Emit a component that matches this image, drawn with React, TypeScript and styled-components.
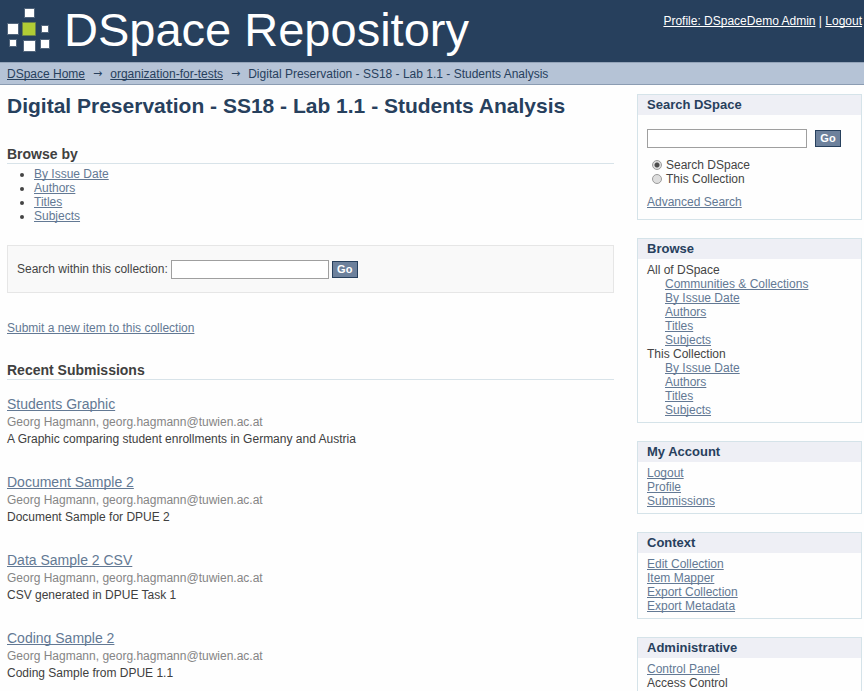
import React from "react";
import styled, { createGlobalStyle } from "styled-components";

const GlobalStyle = createGlobalStyle`
  *, *::before, *::after { box-sizing: border-box; }
  body {
    margin: 0;
    background: #fefefe;
    color: #444444;
    font-family: "Liberation Sans", Arial, Helvetica, sans-serif;
    font-size: 12px;
    line-height: 14px;
  }
  h1, h2, h3, p, ul { margin: 0; padding: 0; }
`;

const Header = styled.header`
  display: flex;
  justify-content: space-between;
  align-items: flex-start;
  height: 62px;
  padding: 0 2px 0 7px;
  background: #27405d;
  color: #ffffff;
`;

const Brand = styled.div`
  display: flex;
  align-items: center;
  gap: 14px;
  height: 60px;
`;

const SiteName = styled.div`
  font-size: 47px;
  line-height: 60px;
`;

const UserBox = styled.nav`
  padding-top: 14px;
`;

const Link = styled.a<{ $tone?: "light" | "dark" }>`
  color: ${(p) =>
    p.$tone === "light" ? "#ffffff" : p.$tone === "dark" ? "#27405d" : "#637994"};
  text-decoration: underline;
  text-decoration-skip-ink: none;
`;

const Trail = styled.ul`
  display: flex;
  align-items: center;
  gap: 8px;
  height: 23px;
  padding: 0 7px;
  list-style: none;
  white-space: nowrap;
  background: #b5c3d6;
  border-top: 1px solid #94a4b9;
  border-bottom: 1px solid #8b9cb2;
  color: #27405d;
`;

const TrailArrow = styled.li`
  font-family: "DejaVu Sans", sans-serif;
  font-size: 11px;
`;

const Layout = styled.div`
  display: grid;
  grid-template-columns: minmax(0, 1fr) 225px;
  column-gap: 23px;
  padding: 0 2px 0 7px;
`;

const Main = styled.main`
  padding-top: 8px;
`;

const PageTitle = styled.h1`
  color: #27405d;
  font-size: 21px;
  line-height: 26px;
`;

const SectionTitle = styled.h2`
  margin-top: 26px;
  border-bottom: 1px solid #d8e3e9;
  color: #404040;
  font-size: 14px;
  line-height: 18px;
`;

const BulletList = styled.ul`
  margin-top: 3px;
  padding-left: 27px;
`;

const CollectionSearch = styled.form`
  display: flex;
  align-items: center;
  gap: 3px;
  height: 48px;
  margin-top: 22px;
  padding: 0 9px;
  background: #f9f9f9;
  border: 1px solid #e6e6e6;
`;

const TextField = styled.input<{ $width: number }>`
  width: ${(p) => p.$width}px;
  height: 19px;
  margin: 0;
  padding: 1px 3px;
  background: #ffffff;
  border: 1px solid #9f9f9f;
  border-radius: 0;
  font: inherit;
`;

const GoButton = styled.button`
  width: 26px;
  height: 17px;
  margin: 0;
  padding: 0;
  background: #6d819c;
  border: 1px solid #27405d;
  border-radius: 0;
  color: #ffffff;
  font-family: inherit;
  font-size: 11px;
  font-weight: bold;
  line-height: 15px;
`;

const SubmitLine = styled.p`
  margin-top: 28px;
`;

const Submissions = styled.ul`
  display: flex;
  flex-direction: column;
  gap: 26px;
  margin-top: 15px;
  list-style: none;
`;

const ItemTitle = styled.h3`
  padding-bottom: 1px;
  font-size: 14px;
  font-weight: normal;
  line-height: 18px;
`;

const ItemText = styled.p<{ $muted?: boolean }>`
  line-height: ${(p) => (p.$muted ? 17 : 16)}px;
  color: ${(p) => (p.$muted ? "#858585" : "#404040")};
`;

const Sidebar = styled.aside`
  display: flex;
  flex-direction: column;
  gap: 18px;
  padding-top: 9px;
`;

const Panel = styled.section`
  border: 1px solid #d5e3e9;
`;

const PanelTitle = styled.h2`
  padding: 0 9px;
  background: #eeeff5;
  color: #27405d;
  font-size: 13px;
  line-height: 20px;
`;

const PanelBody = styled.div`
  padding: 4px 9px 5px;
`;

const SearchBody = styled.form`
  padding: 14px 9px 10px;
`;

const FieldRow = styled.div`
  display: flex;
  align-items: center;
  gap: 8px;
`;

const Choices = styled.div`
  margin: 10px 0 9px 5px;
`;

const Choice = styled.label`
  display: flex;
  align-items: center;
  gap: 4px;
`;

const Radio = styled.input`
  appearance: none;
  width: 10px;
  height: 10px;
  margin: 0;
  border: 1px solid #9b9b9b;
  border-radius: 50%;
  background: #dedede;
  &:checked {
    background: radial-gradient(circle, #4c4c4c 0 2px, #dedede 3px);
  }
`;

const MenuList = styled.ul<{ $nested?: boolean }>`
  padding-left: ${(p) => (p.$nested ? 18 : 0)}px;
  list-style: none;
`;

const Logo = () => (
  <svg width="43" height="44" viewBox="0 0 43 44" aria-hidden="true">
    <g fill="#ffffff" stroke="#53667c" strokeWidth="1">
      <path d="M17.5 .5h10v9h-10zM.5 15.5h11v11H.5zM34.5 17.5h7v7h-7zM2.5 31.5h7v7h-7zM33.5 31.5h9v9h-9zM16.5 32.5h12v11h-12z" />
      <path fill="#b1cc35" stroke="#6b8348" d="M15.5 14.5h13v13h-13z" />
    </g>
  </svg>
);

const browseLinks = ["By Issue Date", "Authors", "Titles", "Subjects"];

const submissions = [
  ["Students Graphic", "A Graphic comparing student enrollments in Germany and Austria"],
  ["Document Sample 2", "Document Sample for DPUE 2"],
  ["Data Sample 2 CSV", "CSV generated in DPUE Task 1"],
  ["Coding Sample 2", "Coding Sample from DPUE 1.1"],
];

const LinkItems = ({ items }: { items: string[] }) => (
  <>
    {items.map((item) => (
      <li key={item}>
        <Link href="#">{item}</Link>
      </li>
    ))}
  </>
);

const MenuPanel = ({ title, children }: { title: string; children: React.ReactNode }) => (
  <Panel>
    <PanelTitle>{title}</PanelTitle>
    <PanelBody>{children}</PanelBody>
  </Panel>
);

export default function App() {
  return (
    <>
      <GlobalStyle />
      <Header>
        <Brand>
          <Logo />
          <SiteName>DSpace Repository</SiteName>
        </Brand>
        <UserBox>
          <Link $tone="light" href="#">Profile: DSpaceDemo Admin</Link>
          {" | "}
          <Link $tone="light" href="#">Logout</Link>
        </UserBox>
      </Header>
      <Trail>
        <li><Link $tone="dark" href="#">DSpace Home</Link></li>
        <TrailArrow aria-hidden="true">→</TrailArrow>
        <li><Link $tone="dark" href="#">organization-for-tests</Link></li>
        <TrailArrow aria-hidden="true">→</TrailArrow>
        <li>Digital Preservation - SS18 - Lab 1.1 - Students Analysis</li>
      </Trail>
      <Layout>
        <Main>
          <PageTitle>Digital Preservation - SS18 - Lab 1.1 - Students Analysis</PageTitle>
          <SectionTitle>Browse by</SectionTitle>
          <BulletList>
            <LinkItems items={browseLinks} />
          </BulletList>
          <CollectionSearch>
            <label htmlFor="collection-query">Search within this collection:</label>
            <TextField $width={158} id="collection-query" type="text" />
            <GoButton type="button">Go</GoButton>
          </CollectionSearch>
          <SubmitLine>
            <Link href="#">Submit a new item to this collection</Link>
          </SubmitLine>
          <SectionTitle>Recent Submissions</SectionTitle>
          <Submissions>
            {submissions.map(([title, text]) => (
              <li key={title}>
                <ItemTitle><Link href="#">{title}</Link></ItemTitle>
                <ItemText $muted>Georg Hagmann, georg.hagmann@tuwien.ac.at</ItemText>
                <ItemText>{text}</ItemText>
              </li>
            ))}
          </Submissions>
        </Main>
        <Sidebar>
          <Panel>
            <PanelTitle>Search DSpace</PanelTitle>
            <SearchBody>
              <FieldRow>
                <TextField $width={160} type="text" aria-label="Search DSpace" />
                <GoButton type="button">Go</GoButton>
              </FieldRow>
              <Choices>
                <Choice><Radio type="radio" name="scope" defaultChecked />Search DSpace</Choice>
                <Choice><Radio type="radio" name="scope" />This Collection</Choice>
              </Choices>
              <Link href="#">Advanced Search</Link>
            </SearchBody>
          </Panel>
          <MenuPanel title="Browse">
            All of DSpace
            <MenuList $nested>
              <LinkItems items={["Communities & Collections", ...browseLinks]} />
            </MenuList>
            This Collection
            <MenuList $nested>
              <LinkItems items={browseLinks} />
            </MenuList>
          </MenuPanel>
          <MenuPanel title="My Account">
            <MenuList><LinkItems items={["Logout", "Profile", "Submissions"]} /></MenuList>
          </MenuPanel>
          <MenuPanel title="Context">
            <MenuList>
              <LinkItems items={["Edit Collection", "Item Mapper", "Export Collection", "Export Metadata"]} />
            </MenuList>
          </MenuPanel>
          <MenuPanel title="Administrative">
            <MenuList>
              <LinkItems items={["Control Panel"]} />
              <li>Access Control</li>
            </MenuList>
          </MenuPanel>
        </Sidebar>
      </Layout>
    </>
  );
}
